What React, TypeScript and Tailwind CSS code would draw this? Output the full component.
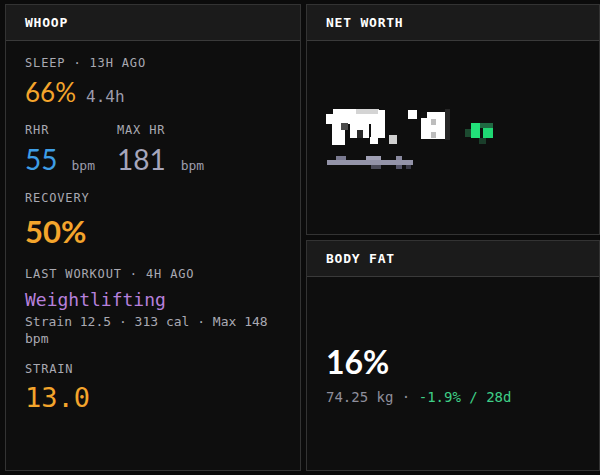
import React from "react";

const mono = "font-['DejaVu_Sans_Mono',monospace]";
const sans = "font-['Lato',sans-serif]";

function Panel({ title, children, className = "" }: { title: string; children: React.ReactNode; className?: string }) {
  return (
    <div className={`flex flex-col border border-[#333333] bg-[#0e0e0e] ${className}`}>
      <div className="flex h-[36px] shrink-0 items-center border-b border-[#3a3a3a] bg-[#1b1b1b] px-[19px]">
        <span className={`${mono} text-[13px] font-bold tracking-[0.06em] text-white`}>{title}</span>
      </div>
      {children}
    </div>
  );
}

function Label({ children }: { children: React.ReactNode }) {
  return <div className={`${mono} text-[12px] leading-[16px] tracking-[0.07em] text-[#a9a9b2]`}>{children}</div>;
}

function Mosaic() {
  const r: [number, number, number, number, string][] = [
    [7, 3, 24, 6, "#ffffff"],
    [30, 3, 23, 6, "#d4d4d4"],
    [52, 4, 7, 7, "#ffffff"],
    [0, 8, 59, 10, "#ffffff"],
    [6, 17, 13, 22, "#ffffff"],
    [15, 17, 7, 7, "#4a4a4a"],
    [24, 17, 19, 15, "#ffffff"],
    [31, 24, 6, 8, "#2a2a2a"],
    [45, 17, 14, 15, "#ffffff"],
    [44, 31, 8, 7, "#ffffff"],
    [63, 29, 8, 9, "#cfcfcf"],
    [82, 4, 9, 9, "#ffffff"],
    [95, 6, 24, 27, "#ffffff"],
    [95, 6, 6, 6, "#111111"],
    [105, 13, 5, 6, "#bdbdbd"],
    [105, 26, 5, 6, "#bdbdbd"],
    [119, 3, 5, 31, "#262626"],
    [139, 23, 6, 8, "#1c4a30"],
    [145, 17, 9, 15, "#22e07a"],
    [154, 17, 13, 5, "#1f6a42"],
    [157, 22, 10, 10, "#1fd873"],
    [153, 32, 7, 6, "#1a3d2a"],
    [1, 54, 86, 5, "#9393a8"],
    [10, 50, 10, 4, "#7a7a90"],
    [40, 50, 15, 4, "#a0a0b4"],
    [70, 50, 6, 4, "#8a8aa0"],
    [45, 59, 10, 4, "#4a4a58"],
    [70, 59, 6, 4, "#55556a"],
    [80, 59, 5, 4, "#3a3a48"],
  ];
  return (
    <svg width="170" height="64" viewBox="0 0 170 64">
      {r.map(([x, y, w, h, c], i) => (
        <rect key={i} x={x} y={y} width={w} height={h} fill={c} />
      ))}
    </svg>
  );
}

export default function App() {
  return (
    <div className="grid h-[475px] w-[600px] grid-cols-[296px_294px] gap-[5px] bg-[#0b0b0b] pb-[4px] pl-[5px] pt-[4px]">
      <Panel title="WHOOP">
        <div className="flex flex-col px-[19px] pt-[14px]">
          <Label>SLEEP · 13H AGO</Label>
          <div className="mt-[5px] flex items-baseline gap-[10px]">
            <span className={`${sans} text-[26px] leading-[32px] text-[#f4a52c]`}>66%</span>
            <span className={`${mono} text-[16px] text-[#9c9cac]`}>4.4h</span>
          </div>
          <div className="mt-[13px] flex gap-[22px]">
            <div>
              <Label>RHR</Label>
              <div className="mt-[5px] flex items-baseline gap-[14px]">
                <span className={`${sans} text-[28px] leading-[32px] text-[#3e9ee6]`}>55</span>
                <span className={`${mono} text-[13px] text-[#9c9cac]`}>bpm</span>
              </div>
            </div>
            <div>
              <Label>MAX HR</Label>
              <div className="mt-[5px] flex items-baseline gap-[15px]">
                <span className={`${sans} text-[28px] leading-[32px] text-[#a6a6bc]`}>181</span>
                <span className={`${mono} text-[13px] text-[#9c9cac]`}>bpm</span>
              </div>
            </div>
          </div>
          <div className="mt-[14px]">
            <Label>RECOVERY</Label>
            <div className={`${sans} mt-[5px] text-[31px] font-bold leading-[40px] text-[#f4a52c]`}>50%</div>
          </div>
          <div className="mt-[15px]">
            <Label>LAST WORKOUT · 4H AGO</Label>
            <div className={`${mono} mt-[5px] text-[18px] leading-[26px] text-[#b680dc]`}>Weightlifting</div>
            <div className={`${mono} text-[13px] leading-[17px] text-[#a9a9b2]`}>Strain 12.5 · 313 cal · Max 148 bpm</div>
          </div>
          <div className="mt-[14px]">
            <Label>STRAIN</Label>
            <div className={`${mono} mt-[4px] text-[27px] leading-[34px] text-[#f4a52c]`}>13.0</div>
          </div>
        </div>
      </Panel>
      <div className="flex flex-col gap-[5px]">
        <Panel title="NET WORTH" className="flex-1">
          <div className="flex flex-1 flex-col justify-center px-[19px]">
            <Mosaic />
          </div>
        </Panel>
        <Panel title="BODY FAT" className="flex-1">
          <div className="flex flex-1 flex-col justify-center px-[19px]">
            <div className={`${sans} text-[32px] font-bold leading-[40px] text-white`}>16%</div>
            <div className={`${mono} mt-[6px] text-[14px] leading-[18px]`}>
              <span className="text-[#8e8e9c]">74.25 kg · </span>
              <span className="text-[#3fce87]">-1.9% / 28d</span>
            </div>
          </div>
        </Panel>
      </div>
    </div>
  );
}
